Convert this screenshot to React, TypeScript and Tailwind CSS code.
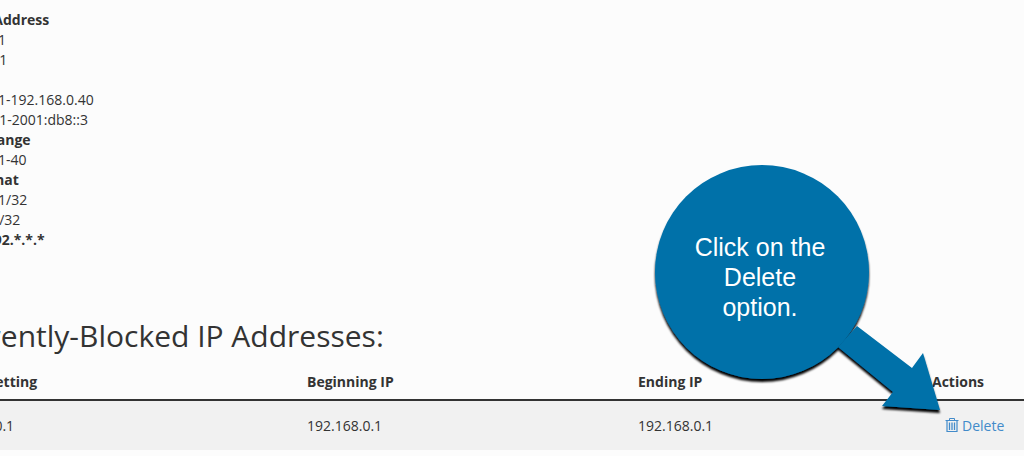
const helpLines = [
  { text: "Single IP Address", bold: true },
  { text: "192.168.0.1" },
  { text: "2001:db8::1" },
  { text: "Range", bold: true },
  { text: "192.168.0.1-192.168.0.40" },
  { text: "2001:db8::1-2001:db8::3" },
  { text: "Implied Range", bold: true },
  { text: "192.168.0.1-40" },
  { text: "CIDR Format", bold: true },
  { text: "192.168.0.1/32" },
  { text: "2001:db8::/32" },
  { text: "Implies 192.*.*.*", bold: true },
];

function TrashIcon() {
  return (
    <svg width="14" height="16" viewBox="0 0 14 16" fill="none" stroke="#428bca" className="mb-[2px] shrink-0">
      <path d="M0.5 3.5H13.5" />
      <path d="M4.5 3V1.5H9.5V3" />
      <path d="M2 3.5V14.5H12V3.5" strokeWidth="1.2" />
      <path d="M4.5 5.5V13M7 5.5V13M9.5 5.5V13" strokeWidth="1.3" />
    </svg>
  );
}

function Callout() {
  return (
    <svg className="absolute top-[150px] left-[640px]" width="330" height="280" viewBox="640 150 330 280">
      <defs>
        <filter id="callout-shadow" x="-10%" y="-10%" width="120%" height="120%">
          <feDropShadow dx="0" dy="3" stdDeviation="1.2" floodColor="#000" floodOpacity="1" />
        </filter>
      </defs>
      <g fill="#0071a9" filter="url(#callout-shadow)">
        <path d="M857 326L912 368L923 353L940 410L882 406L893 392L838 347Z" />
        <circle cx="762" cy="272" r="107" />
      </g>
    </svg>
  );
}

export default function App() {
  return (
    <div className="relative h-[456px] w-[1024px] overflow-hidden bg-[#fcfcfc] text-[14px] leading-[20px] text-[#333333] font-['Open_Sans',sans-serif]">
      <div className="ml-[-69px] pt-[10px]">
        {helpLines.map((line) => (
          <div key={line.text} className={line.bold ? "font-bold" : ""}>
            {line.text}
          </div>
        ))}
      </div>

      <h2 className="ml-[-61px] mt-[66px] text-[30px] leading-[40px] font-normal">Currently-Blocked IP Addresses:</h2>

      <div className="ml-[-61px] mt-[9px] w-[1085px]">
        <div className="flex h-[36px] items-center border-b-2 border-[#333333] font-bold">
          <div className="w-[368px]">Server Setting</div>
          <div className="w-[331px]">Beginning IP</div>
          <div className="w-[294px]">Ending IP</div>
          <div>Actions</div>
        </div>
        <div className="flex h-[49px] items-center bg-[#f1f1f1]">
          <div className="w-[368px]">192.168.0.1</div>
          <div className="w-[331px]">192.168.0.1</div>
          <div className="w-[307px]">192.168.0.1</div>
          <a className="flex items-center gap-[3px] text-[#428bca]">
            <TrashIcon />
            Delete
          </a>
        </div>
      </div>

      <Callout />
      <div className="absolute top-[232px] left-[660px] w-[200px] text-center font-['Liberation_Sans',sans-serif] text-[25px] leading-[30px] text-white">
        Click on the
        <br />
        Delete
        <br />
        option.
      </div>
    </div>
  );
}
